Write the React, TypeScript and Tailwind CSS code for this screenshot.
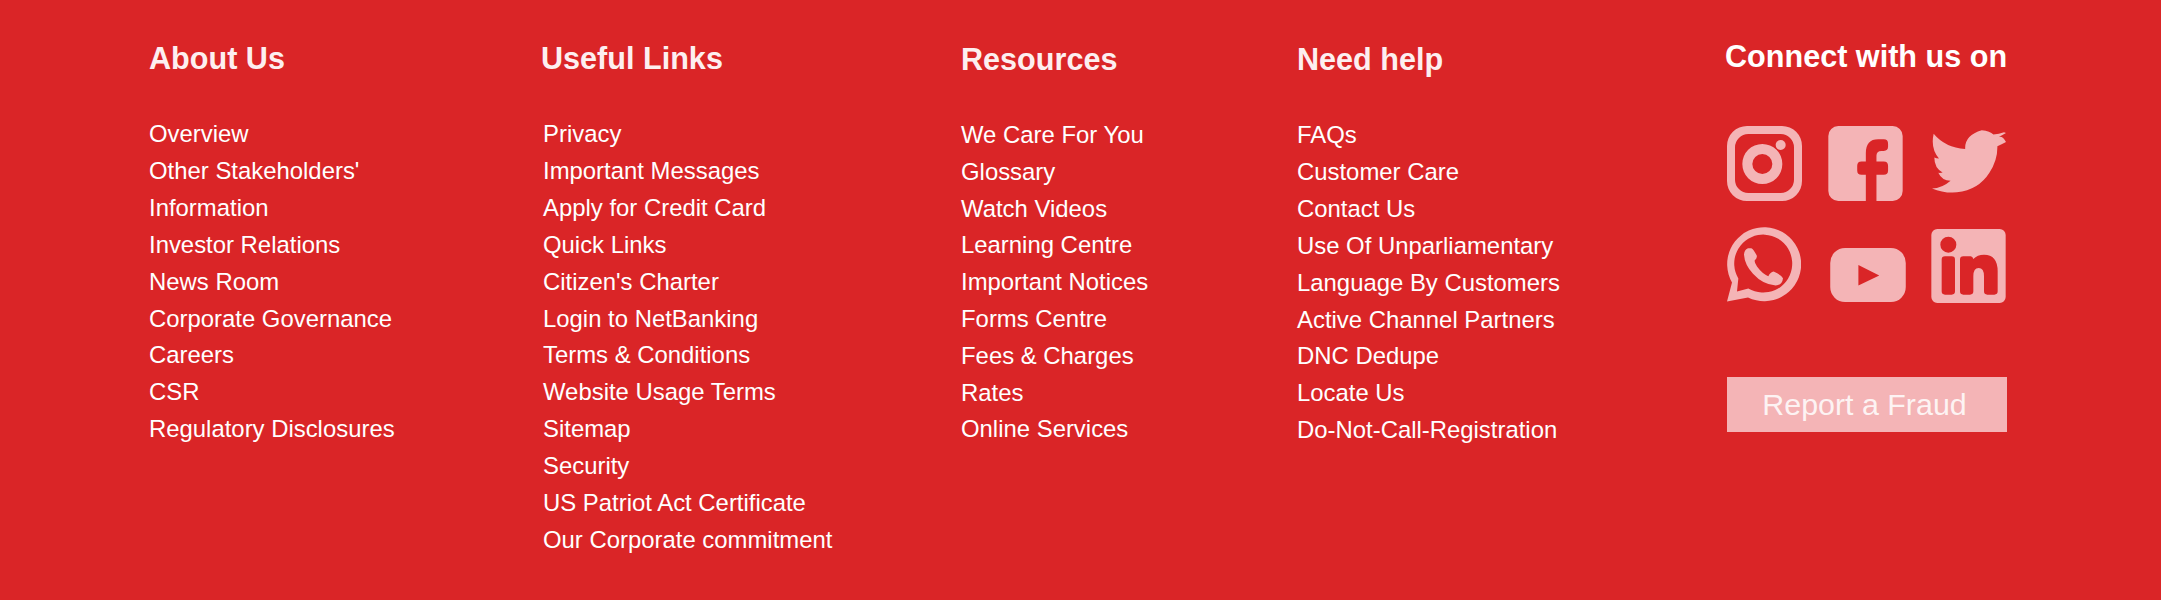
const columns = [
  {
    title: "About Us",
    box: "w-[392px]",
    head: "",
    list: "leading-[36.9px]",
    links: [
      "Overview",
      "Other Stakeholders'",
      "Information",
      "Investor Relations",
      "News Room",
      "Corporate Governance",
      "Careers",
      "CSR",
      "Regulatory Disclosures",
    ],
  },
  {
    title: "Useful Links",
    box: "w-[420px]",
    head: "",
    list: "pl-[2px] leading-[36.9px]",
    links: [
      "Privacy",
      "Important Messages",
      "Apply for Credit Card",
      "Quick Links",
      "Citizen's Charter",
      "Login to NetBanking",
      "Terms & Conditions",
      "Website Usage Terms",
      "Sitemap",
      "Security",
      "US Patriot Act Certificate",
      "Our Corporate commitment",
    ],
  },
  {
    title: "Resources",
    box: "w-[336px]",
    head: "mt-[1px]",
    list: "leading-[36.8px]",
    links: [
      "We Care For You",
      "Glossary",
      "Watch Videos",
      "Learning Centre",
      "Important Notices",
      "Forms Centre",
      "Fees & Charges",
      "Rates",
      "Online Services",
    ],
  },
  {
    title: "Need help",
    box: "w-[431px]",
    head: "mt-[1px]",
    list: "leading-[36.9px]",
    links: [
      "FAQs",
      "Customer Care",
      "Contact Us",
      "Use Of Unparliamentary",
      "Language By Customers",
      "Active Channel Partners",
      "DNC Dedupe",
      "Locate Us",
      "Do-Not-Call-Registration",
    ],
  },
];

function Instagram() {
  return (
    <svg viewBox="82 318 225 225" className="w-[75px] h-[75px] fill-[#f4b4b6]">
      <path
        fillRule="evenodd"
        d="M142 318H247A60 60 0 0 1 307 378V483A60 60 0 0 1 247 543H142A60 60 0 0 1 82 483V378A60 60 0 0 1 142 318ZM146 342A40 40 0 0 0 106 382V479A40 40 0 0 0 146 519H243A40 40 0 0 0 283 479V382A40 40 0 0 0 243 342Z"
      />
      <path
        fillRule="evenodd"
        d="M188 372A60 60 0 1 1 188 492A60 60 0 1 1 188 372ZM188 402A30 30 0 1 0 188 462A30 30 0 1 0 188 402Z"
      />
      <circle cx="243" cy="375" r="15" />
    </svg>
  );
}

function Facebook() {
  return (
    <svg viewBox="385 318 224 226" className="w-[75px] h-[75px] fill-[#f4b4b6]">
      <path d="M415 318H579A30 30 0 0 1 609 348V514A30 30 0 0 1 579 544H530V465H552Q565 465 565 452V438Q565 425 552 425H530V408Q530 393 545 393H552Q565 393 565 380V371Q565 358 552 358H535Q498 358 498 400V425H485Q472 425 472 438V452Q472 465 485 465H498V544H415A30 30 0 0 1 385 514V348A30 30 0 0 1 415 318Z" />
    </svg>
  );
}

function Twitter() {
  return (
    <svg viewBox="695 330 223 188" className="w-[74px] h-[63px] fill-[#f4b4b6] ml-[1px] mt-[4px]">
      <path d="M918 338Q906 345 896 350Q908 346 918 365Q905 372 892 378Q893 420 868 458Q835 510 770 517Q730 520 695 505Q725 505 751 482Q725 482 714 458Q722 459 727 457Q702 444 702 412Q708 415 716 415Q690 385 700 340Q735 382 795 386Q793 345 845 330Q870 332 880 343Q897 342 912 336Z" />
    </svg>
  );
}

function Whatsapp() {
  return (
    <svg viewBox="82 622 222 224" className="w-[74px] h-[75px] fill-[#f4b4b6]">
      <path
        fillRule="evenodd"
        d="M97 788A111 111 0 1 1 145 833L82 845ZM116 776A87 87 0 1 1 146 806L112 815Z"
      />
      <path d="M145 685Q133 690 133 705Q135 735 160 762Q190 795 228 797Q248 795 250 775Q245 765 222 755Q212 757 206 769Q188 762 172 740Q164 728 165 722Q175 712 170 705Q162 688 155 685Z" />
    </svg>
  );
}

function Youtube() {
  return (
    <svg viewBox="392 682 228 163" className="w-[76px] h-[54px] fill-[#f4b4b6] ml-[2px] mb-[1px]">
      <path
        fillRule="evenodd"
        d="M437 682H575A45 45 0 0 1 620 727V800A45 45 0 0 1 575 845H437A45 45 0 0 1 392 800V727A45 45 0 0 1 437 682ZM477 733V795L540 765Z"
      />
    </svg>
  );
}

function Linkedin() {
  return (
    <svg viewBox="694 628 223 222" className="w-[75px] h-[74px] fill-[#f4b4b6] mt-[2px]">
      <path
        fillRule="evenodd"
        d="M712 628H899A18 18 0 0 1 917 646V832A18 18 0 0 1 899 850H712A18 18 0 0 1 694 832V646A18 18 0 0 1 712 628ZM745 651A24 24 0 1 0 745 699A24 24 0 1 0 745 651ZM735 710Q725 710 725 720V815Q725 825 735 825H755Q765 825 765 815V720Q765 710 755 710ZM790 710Q780 710 780 720V815Q780 825 790 825H810Q820 825 820 815V770Q820 745 836 745Q852 745 852 770V815Q852 825 862 825H883Q893 825 893 815V755Q893 705 852 705Q832 705 820 718Q818 710 812 710Z"
      />
    </svg>
  );
}

export default function App() {
  return (
    <footer className="h-[600px] bg-[#da2527] text-white pl-[149px] flex font-['Liberation_Sans',Arial,sans-serif]">
      {columns.map((col) => (
        <div key={col.title} className={col.box}>
          <h3 className={`${col.head} pt-[38px] text-[30.6px] leading-[40px] font-bold text-[#fdeff0]`}>
            {col.title}
          </h3>
          <ul className={`${col.list} mt-[38px] text-[23.9px]`}>
            {col.links.map((link) => (
              <li key={link}>{link}</li>
            ))}
          </ul>
        </div>
      ))}
      <div className="w-[280px] ml-[-1px]">
        <h3 className="pt-[36px] ml-[-2px] text-[30.6px] leading-[40px] font-bold whitespace-nowrap">
          Connect with us on
        </h3>
        <div className="mt-[50px] grid grid-cols-[101px_103px_76px] grid-rows-[101px_76px]">
          <Instagram />
          <Facebook />
          <Twitter />
          <Whatsapp />
          <div className="self-end">
            <Youtube />
          </div>
          <Linkedin />
        </div>
        <div className="mt-[74px] h-[55px] pr-[5px] bg-[#f4b4b6] text-[#fdf3f3] text-[30.4px] flex items-center justify-center">
          Report a Fraud
        </div>
      </div>
    </footer>
  );
}
